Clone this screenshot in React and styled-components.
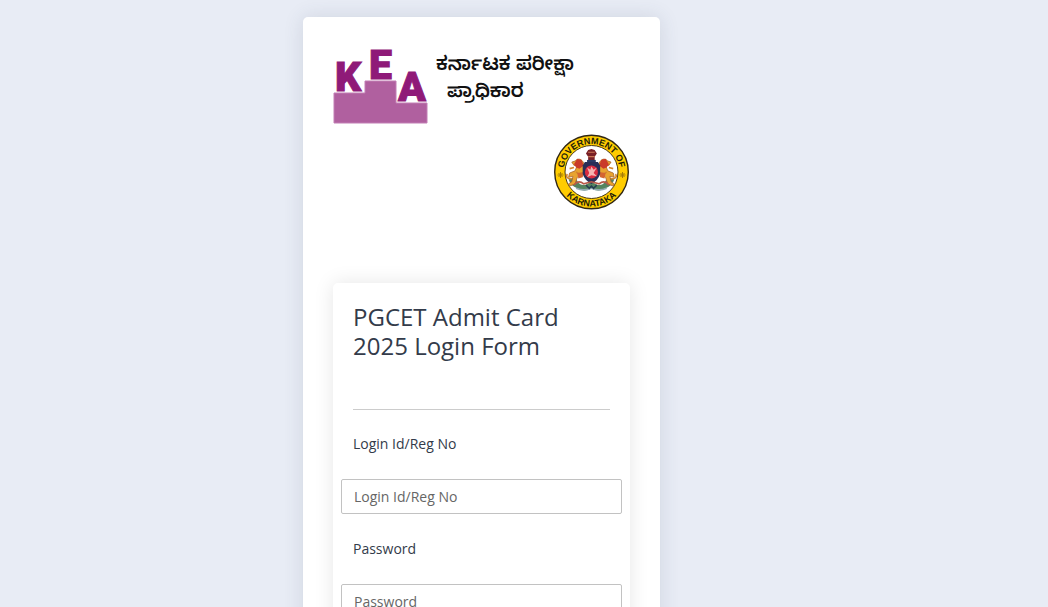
import React from "react";
import styled, { createGlobalStyle } from "styled-components";

const GlobalStyle = createGlobalStyle`
  *, *::before, *::after { box-sizing: border-box; }
  html, body, #root { height: 100%; }
  body {
    margin: 0;
    overflow: hidden;
    background: #e8ecf5;
    color: #333b4a;
    font: 14px/20px "Open Sans", sans-serif;
  }
`;

const Page = styled.main`
  display: grid;
  grid-template-columns: 303fr 357px 388fr;
  height: 100%;
  overflow: hidden;
  padding-top: 17px;
`;

const Card = styled.section`
  grid-column: 2;
  align-self: start;
  padding: 30px 30px 40px;
  border-radius: 5px;
  background: #fff;
  box-shadow: 0 0 20px rgba(60, 70, 100, 0.14);
`;

const Brand = styled.header`
  display: flex;
  flex-direction: column;
  gap: 7px;
  margin-bottom: 73px;
`;

const Logo = styled.svg`
  display: block;
  width: 250px;
  height: 80px;
  overflow: visible;
`;

const Letter = styled.text`
  font: 900 41px Roboto, "Open Sans", sans-serif;
  fill: #8f1a78;
  stroke: #8f1a78;
  stroke-width: 1px;
`;

const Kannada = styled.text`
  font: 600 19px "Noto Sans Kannada", "Noto Sans", sans-serif;
  fill: #111;
`;

const Emblem = styled.svg`
  display: block;
  align-self: flex-end;
  width: 76px;
  height: 76px;
`;

const RingText = styled.text`
  font: 700 9px "Liberation Sans", sans-serif;
  fill: #221c08;
`;

const Form = styled.form`
  padding: 19px 20px 30px;
  border-radius: 5px;
  background: #fff;
  box-shadow: 0 0 20px rgba(0, 0, 0, 0.1);
`;

const Title = styled.h1`
  margin: 0;
  padding-bottom: 49px;
  border-bottom: 1px solid #ccc;
  font-size: 24px;
  font-weight: 400;
  line-height: 29px;
`;

const Fields = styled.div`
  display: flex;
  flex-direction: column;
  gap: 24px;
  padding-top: 23px;
`;

const Field = styled.div`
  display: flex;
  flex-direction: column;
  gap: 25px;
`;

const Label = styled.label`
  line-height: 21px;
`;

const Input = styled.input`
  height: 35px;
  margin: 0 -12px;
  padding: 6px 12px;
  border: 1px solid #c2c2c2;
  border-radius: 2px;
  background: #fff;
  color: #333b4a;
  font: inherit;
  &::placeholder { color: #666; opacity: 1; }
`;

function KeaLogo() {
  return (
    <Logo viewBox="0 0 250 80" role="img" aria-label="KEA">
      <path d="M1 46H32V34H63V56H94V76H1Z" fill="#b0609f" stroke="#c27eb4" strokeWidth="1" />
      <Letter x="2" y="44">K</Letter>
      <Letter x="36" y="32">E</Letter>
      <Letter x="65" y="54">A</Letter>
      <Kannada x="103" y="23">ಕರ್ನಾಟಕ ಪರೀಕ್ಷಾ</Kannada>
      <Kannada x="114" y="50">ಪ್ರಾಧಿಕಾರ</Kannada>
    </Logo>
  );
}

function Supporter() {
  return (
    <g>
      <path d="M31 30C29 26 26 25 23 28L20 29L22 32L25 32L23 37L18 39L17 43L21 42L20 47L17 49L18 51L23 49L25 43L29 40L33 35Z" fill="#e8a331" stroke="#a7622a" strokeWidth=".7" />
      <path d="M22 31L25 26L29 27L31 32L27 35L24 34Z" fill="#ca3b2b" />
      <path d="M20 44C16 45 14 42 16 40M22 34L18 35M24 38L29 42" fill="none" stroke="#d4862e" strokeWidth="1.5" />
      <path d="M25 39L31 38L30 43L26 44Z" fill="#d46532" />
    </g>
  );
}

function StateEmblem() {
  return (
    <Emblem viewBox="0 0 76 76" role="img" aria-label="Government of Karnataka">
      <defs>
        <path id="ring-top" d="M9.5 38A28 28 0 0 1 65.5 38" />
        <path id="ring-bottom" d="M3 38A34.5 34.5 0 0 0 72 38" />
      </defs>
      <circle cx="37.5" cy="38" r="36.8" fill="#fc0" stroke="#302714" strokeWidth="1.4" />
      <circle cx="37.5" cy="38" r="26.5" fill="#fff" stroke="#4a3a14" strokeWidth="1" />
      <RingText textAnchor="middle"><textPath href="#ring-top" startOffset="50%">GOVERNMENT OF</textPath></RingText>
      <RingText textAnchor="middle"><textPath href="#ring-bottom" startOffset="50%">KARNATAKA</textPath></RingText>
      <path d="M6.5 38V44M3.5 41H9.5M4.5 39L8.5 43M8.5 39L4.5 43M68.5 38V44M65.5 41H71.5M66.5 39L70.5 43M70.5 39L66.5 43" fill="none" stroke="#a57c08" strokeWidth="1" />
      <g transform="translate(-4 -3.5) scale(1.09)">
        <path d="M17 45Q23 41 26 48Q31 53 38 46Q45 53 50 48Q53 41 59 45Q57 51 51 53Q44 57 38 53Q32 57 25 53Q19 51 17 45Z" fill="#54845f" />
        <Supporter />
        <g transform="translate(76 0) scale(-1 1)"><Supporter /></g>
        <path d="M32 29H44L46 32V40Q44 46 38 49Q32 46 30 40V32Z" fill="#292e58" />
        <circle cx="38" cy="38" r="6" fill="#d92b40" />
        <path d="M34 34L37 36L38 33L40 36L43 34L40 39L43 42L38 41L34 43L36 39Z" fill="#f4b3b2" />
        <path d="M35 28V24L33 21L35 18L38 17L41 18L43 21L41 24V28Z" fill="#792026" />
        <path d="M35 20H41M35 24H41" stroke="#cb7654" strokeWidth="1" />
        <path d="M34 28H42" stroke="#2b3965" strokeWidth="2" />
        <path d="M22 50Q26 45 31 49L38 47L45 49Q50 45 54 50" fill="none" stroke="#b75a49" strokeWidth="1.5" />
        <path d="M24 53Q31 56 38 53Q45 56 52 53" fill="none" stroke="#91aab3" strokeWidth="1.5" />
        <path d="M33 50L36 53L38 51L40 53L43 50" fill="none" stroke="#263f51" strokeWidth="1.5" />
      </g>
    </Emblem>
  );
}

export default function App() {
  return (
    <>
      <GlobalStyle />
      <Page>
        <Card>
          <Brand>
            <KeaLogo />
            <StateEmblem />
          </Brand>
          <Form>
            <Title>PGCET Admit Card 2025 Login Form</Title>
            <Fields>
              <Field>
                <Label htmlFor="login-id">Login Id/Reg No</Label>
                <Input id="login-id" type="text" placeholder="Login Id/Reg No" />
              </Field>
              <Field>
                <Label htmlFor="password">Password</Label>
                <Input id="password" type="password" placeholder="Password" />
              </Field>
            </Fields>
          </Form>
        </Card>
      </Page>
    </>
  );
}
